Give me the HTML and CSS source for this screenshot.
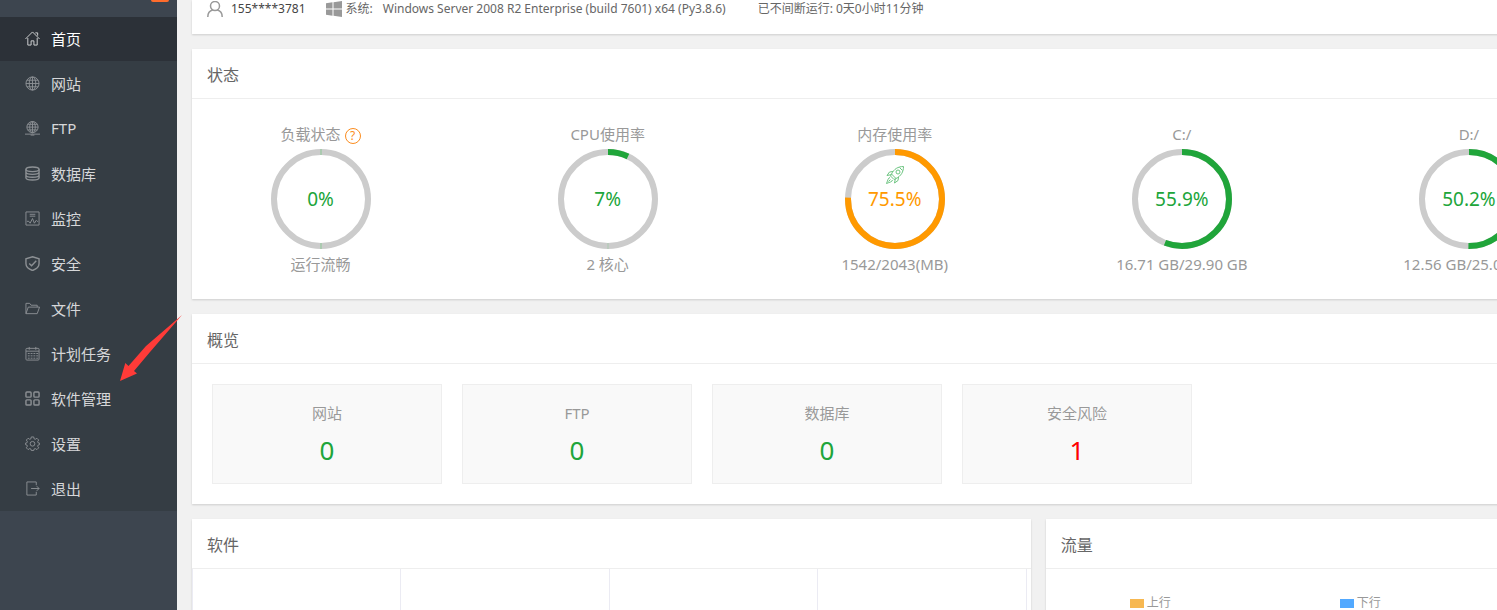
FILE: index.html
```html
<!DOCTYPE html>
<html lang="zh-CN">
<head>
    <meta charset="UTF-8">
    <meta name="viewport" content="width=device-width, initial-scale=1.0">
    <title>首页</title>
    <link rel="stylesheet" href="styles.css">
</head>
<body>
    <aside class="sidebar">
        <div class="sidebar-top"><span class="message-count"></span></div>
        <nav class="menu">
            <a class="active" href="#">
                <svg viewBox="0 0 16 16"><path d="M.5 8.500 8 1l7.500 7.500M3 7.500v7.500h3.500v-4.500h3v4.500H13v-7.500M11 2h2.500v3"/></svg>
                首页
            </a>
            <a href="#site">
                <svg viewBox="0 0 16 16"><circle cx="8" cy="8" r="7"/><ellipse cx="8" cy="8" rx="3.500" ry="7"/><path d="M8 1v14M1 8h14M2 4.500h12M2 11.500h12"/></svg>
                网站
            </a>
            <a href="#ftp">
                <svg viewBox="0 0 16 16"><circle cx="8" cy="6.500" r="6"/><ellipse cx="8" cy="6.500" rx="3" ry="6"/><path d="M8 .5v12M2 6.500h12M3 3.500h10M3 9.500h10M0 14h16M6 15h4"/></svg>
                FTP
            </a>
            <a href="#database">
                <svg class="bold" viewBox="0 0 16 16"><ellipse cx="8" cy="3.500" rx="7" ry="2.500"/><path d="M1 3.500v9c0 3.300 14 3.300 14 0v-9M1 6.500c0 3.300 14 3.300 14 0M1 9.500c0 3.300 14 3.300 14 0"/></svg>
                数据库
            </a>
            <a href="#control">
                <svg viewBox="0 0 16 16"><path d="M1 1h14v14H1zM5 3.500h6M5 5.500h6M2 11h2l1.500 2L8 8l2 5 2-3 1 1h1"/></svg>
                监控
            </a>
            <a href="#firewall">
                <svg class="bold" viewBox="0 0 16 16"><path d="M8 .8 15 3v5c0 3.500-3 6-7 7.500C4 14 1 11.500 1 8V3zM4.500 8l2.500 2.500L12 5"/></svg>
                安全
            </a>
            <a href="#files">
                <svg viewBox="0 0 16 16"><path d="M1 13.500V2.500h4l1.500 2H13v2M1 13.500 3.500 6.500H15.500L13 13.500z"/></svg>
                文件
            </a>
            <a href="#crontab">
                <svg viewBox="0 0 16 16"><rect x="1" y="2.500" width="14" height="12.500" rx="1"/><path d="M1 5.500h14M4.500 1v3M11.500 1v3"/><path stroke-dasharray="2 1" d="M3 8h11M3 10.500h11M3 13h11"/></svg>
                计划任务
            </a>
            <a href="#soft">
                <svg class="bold" viewBox="0 0 16 16"><rect x="1" y="1" width="5.500" height="5.500" rx="1"/><rect x="9.500" y="1" width="5.500" height="5.500" rx="1"/><rect x="1" y="9.500" width="5.500" height="5.500" rx="1"/><rect x="9.500" y="9.500" width="5.500" height="5.500" rx="1"/></svg>
                软件管理
            </a>
            <a href="#config">
                <svg viewBox="0 0 16 16"><path d="M6.700 1h2.600l.4 2 1.300.5 1.700-1.100 1.900 1.900L13.500 6l.5 1.300 1.500.3v1.600l-1.500.4-.5 1.300 1.100 1.700-1.900 1.900-1.700-1.100-1.300.5-.4 1.600H6.700l-.4-1.600-1.300-.5-1.700 1.100-1.900-1.900L2.500 10.900 2 9.600.5 9.200V7.600L2 7.300 2.500 6 1.400 4.300l1.900-1.900L5 3.500 6.300 3z"/><circle cx="8" cy="8.300" r="2.500"/></svg>
                设置
            </a>
            <a href="#exit">
                <svg viewBox="0 0 16 16"><path d="M12 4.500V1H2v14h10v-3.500M6.500 8H15M12.500 5.500 15 8l-2.500 2.500"/></svg>
                退出
            </a>
        </nav>
    </aside>

    <main class="main">
        <div class="page">
            <header class="card info">
                <svg class="user-icon" viewBox="0 0 16 16"><circle cx="8" cy="5" r="4.500"/><path d="M.8 16c0-4 2.500-6.500 5-7M15.200 16c0-4-2.500-6.500-5-7"/></svg>
                <span class="user">155****3781</span>
                <svg class="windows-icon" viewBox="0 0 16 16"><path d="M0 2.200 6.500 1.300v6.200H0zM7.500 1.200 16 0v7.500H7.500zM0 8.500h6.500v6.200L0 13.800zM7.500 8.500H16V16l-8.500-1.200z"/></svg>
                <span class="system-label">系统:</span>
                <span class="system">Windows Server 2008 R2 Enterprise (build 7601) x64 (Py3.8.6)</span>
                <span>已不间断运行: 0天0小时11分钟</span>
            </header>

            <section class="card">
                <h2>状态</h2>
                <ul class="gauges">
                    <li>
                        <h3>负载状态 <a class="help" href="#help">?</a></h3>
                        <div class="gauge">
                            <svg viewBox="0 0 100 100"><circle class="track" cx="50" cy="50" r="47"/><path class="seam" d="M50 0v6M50 94v6"/></svg>
                            <span>0%</span>
                        </div>
                        <p>运行流畅</p>
                    </li>
                    <li>
                        <h3>CPU使用率</h3>
                        <div class="gauge">
                            <svg viewBox="0 0 100 100"><circle class="track" cx="50" cy="50" r="47"/><path class="seam thin" d="M50 94v6"/><circle class="value" cx="50" cy="50" r="47" pathLength="100" stroke-dasharray="7 100"/></svg>
                            <span>7%</span>
                        </div>
                        <p>2 核心</p>
                    </li>
                    <li>
                        <h3>内存使用率</h3>
                        <div class="gauge warning">
                            <svg viewBox="0 0 100 100"><circle class="track" cx="50" cy="50" r="47"/><circle class="value" cx="50" cy="50" r="47" pathLength="100" stroke-dasharray="75.5 100"/></svg>
                            <svg class="rocket" viewBox="0 0 18 18"><path d="M17.500.5C12 .5 8 3 5.500 8l4.500 4.500c5-2.500 7.500-6.500 7.500-12zM13.500 1.500l3 3M7 5.500 3.500 6 1 9.500l4-.8M12.500 11l-.5 3.500L8.500 17l.8-4M5.500 8 4.500 10l3.500 3.500 2-1M4 11.500C2 12 2 14 .5 17.500 4 16 6 16 6.500 14M4.500 13.500l-2 2"/><circle cx="12" cy="6" r="2"/></svg>
                            <span>75.5%</span>
                        </div>
                        <p>1542/2043(MB)</p>
                    </li>
                    <li>
                        <h3>C:/</h3>
                        <div class="gauge">
                            <svg viewBox="0 0 100 100"><circle class="track" cx="50" cy="50" r="47"/><circle class="value" cx="50" cy="50" r="47" pathLength="100" stroke-dasharray="55.9 100"/></svg>
                            <span>55.9%</span>
                        </div>
                        <p>16.71 GB/29.90 GB</p>
                    </li>
                    <li>
                        <h3>D:/</h3>
                        <div class="gauge">
                            <svg viewBox="0 0 100 100"><circle class="track" cx="50" cy="50" r="47"/><circle class="value" cx="50" cy="50" r="47" pathLength="100" stroke-dasharray="50.2 100"/></svg>
                            <span>50.2%</span>
                        </div>
                        <p>12.56 GB/25.00 GB</p>
                    </li>
                </ul>
            </section>

            <section class="card">
                <h2>概览</h2>
                <ul class="overview">
                    <li><h3>网站</h3><a href="#site">0</a></li>
                    <li><h3>FTP</h3><a href="#ftp">0</a></li>
                    <li><h3>数据库</h3><a href="#database">0</a></li>
                    <li><h3>安全风险</h3><a class="risk" href="#risk">1</a></li>
                </ul>
            </section>

            <div class="columns">
                <section class="card">
                    <h2>软件</h2>
                    <div class="soft-grid"><div></div><div></div><div></div><div></div></div>
                </section>
                <section class="card">
                    <h2>流量</h2>
                    <ul class="traffic">
                        <li><i class="up"></i>上行</li>
                        <li><i class="down"></i>下行</li>
                    </ul>
                </section>
            </div>
        </div>
    </main>

    <!-- points at the software menu entry -->
    <svg class="arrow" viewBox="0 0 62 66"><path d="M62 0 26 31 8.500 51 5.300 48 0 66l17-7.500-3-2.500L30 37z"/></svg>
</body>
</html>
```

FILE: styles.css
```css
* {
    box-sizing: border-box;
}

body {
    display: flex;
    height: 100vh;
    margin: 0;
    overflow: hidden;
    background: #f1f1f1;
    color: #666;
    font-family: "Noto Sans", "Noto Sans CJK SC", sans-serif;
    font-size: 15px;
}

h2, h3, p, ul {
    margin: 0;
    padding: 0;
    font-weight: normal;
    list-style: none;
}

a {
    text-decoration: none;
}

svg {
    flex: none;
    fill: none;
}

.sidebar {
    flex: none;
    width: 177px;
    background: #3d454f;
}

.sidebar-top {
    display: flex;
    justify-content: flex-end;
    height: 17px;
    padding-right: 8px;
}

.message-count {
    width: 18px;
    height: 2px;
    border-radius: 0 0 4px 4px;
    background: #ff6c2c;
}

.menu {
    display: flex;
    flex-direction: column;
    gap: 1px;
    background: #353d44;
}

.menu a {
    display: flex;
    align-items: center;
    gap: 11px;
    height: 44px;
    padding: 0 0 2px 25px;
    color: #d6d7d9;
}

.menu a.active {
    background: #2c3138;
    color: #fff;
}

.menu svg {
    width: 15px;
    height: 15px;
    stroke: #8c9094;
}

.menu .active svg {
    stroke: #d6d7d9;
}

.menu .bold {
    stroke-width: 1.5;
}

.main {
    flex: 1;
    min-width: 0;
    padding-left: 15px;
    overflow: hidden;
}

/* the dashboard is wider than the window and runs off the right side */
.page {
    display: flex;
    flex-direction: column;
    gap: 15px;
    width: 129.7%;
}

.card {
    background: #fff;
    box-shadow: 0 1px 2px rgba(0, 0, 0, 0.15);
}

.card h2 {
    height: 50px;
    padding-left: 15px;
    border-bottom: 1px solid #eee;
    font-size: 16px;
    line-height: 53px;
}

.info {
    display: flex;
    align-items: center;
    height: 34px;
    padding: 0 15px 17px;
    font-size: 12px;
    line-height: 17px;
    white-space: nowrap;
}

.info svg {
    width: 16px;
    height: 16px;
}

.user-icon {
    stroke: #999;
    stroke-width: 1.5;
}

.info .user {
    margin: 0 20px 0 8px;
    color: #444;
}

.windows-icon {
    fill: #999;
}

.system-label {
    margin: 0 10px 0 4px;
}

.system {
    margin-right: 32px;
}

.gauges {
    display: grid;
    grid-template-columns: repeat(6, 1fr);
    margin: 0 -15px;
    padding: 25px 0;
    color: #999;
    line-height: 20px;
}

.gauges li {
    display: flex;
    flex-direction: column;
    align-items: center;
    gap: 5px;
}

.gauges h3 {
    display: flex;
    align-items: flex-end;
    gap: 4px;
    font-size: 15px;
}

.help {
    width: 16px;
    height: 16px;
    border: 1px solid #fb8c1e;
    border-radius: 50%;
    color: #fb8c1e;
    font-size: 12px;
    line-height: 14px;
    text-align: center;
}

.gauge {
    display: grid;
    place-items: center;
    width: 100px;
    height: 100px;
    color: #20a53a;
    font-size: 19px;
}

.gauge > * {
    grid-area: 1 / 1;
}

.gauge.warning {
    color: #ff9900;
}

.track {
    stroke: #ccc;
    stroke-width: 6;
}

.value {
    stroke: currentColor;
    stroke-width: 6;
    transform: rotate(-90deg);
    transform-origin: center;
}

.seam {
    stroke: #abcab0;
    stroke-width: 2;
}

.seam.thin {
    stroke-width: 1;
}

.rocket {
    align-self: start;
    width: 18px;
    height: 18px;
    margin-top: 17px;
    stroke: #6cc480;
}

.overview {
    display: flex;
    gap: 20px;
    padding: 20px;
}

.overview li {
    width: 230px;
    height: 100px;
    padding-top: 18px;
    border: 1px solid #eee;
    background: #f9f9f9;
    text-align: center;
}

.overview h3 {
    color: #999;
    font-size: 15px;
    line-height: 20px;
}

.overview a {
    display: block;
    margin-top: 8px;
    color: #20a53a;
    font-size: 26px;
    line-height: 38px;
}

.overview .risk {
    color: #f00;
}

.columns {
    display: grid;
    grid-template-columns: 1fr 1fr;
    gap: 15px;
}

.soft-grid {
    display: grid;
    grid-template-columns: repeat(4, 1fr);
    height: 140px;
    margin-right: 4px;
    border-left: 1px solid #ebebf3;
}

.soft-grid div {
    border-right: 1px solid #ebebf3;
}

.traffic {
    display: grid;
    grid-template-columns: repeat(3, 1fr);
    padding: 24px 125px 0 84px;
    color: #999;
    font-size: 12px;
    line-height: 20px;
}

.traffic li {
    display: flex;
    align-items: center;
    gap: 3px;
}

.traffic i {
    width: 14px;
    height: 9px;
    background: #f7b851;
}

.traffic .down {
    background: #52a9ff;
}

.arrow {
    position: absolute;
    top: 315px;
    left: 120px;
    width: 62px;
    height: 66px;
    fill: #ff3b38;
}
```
